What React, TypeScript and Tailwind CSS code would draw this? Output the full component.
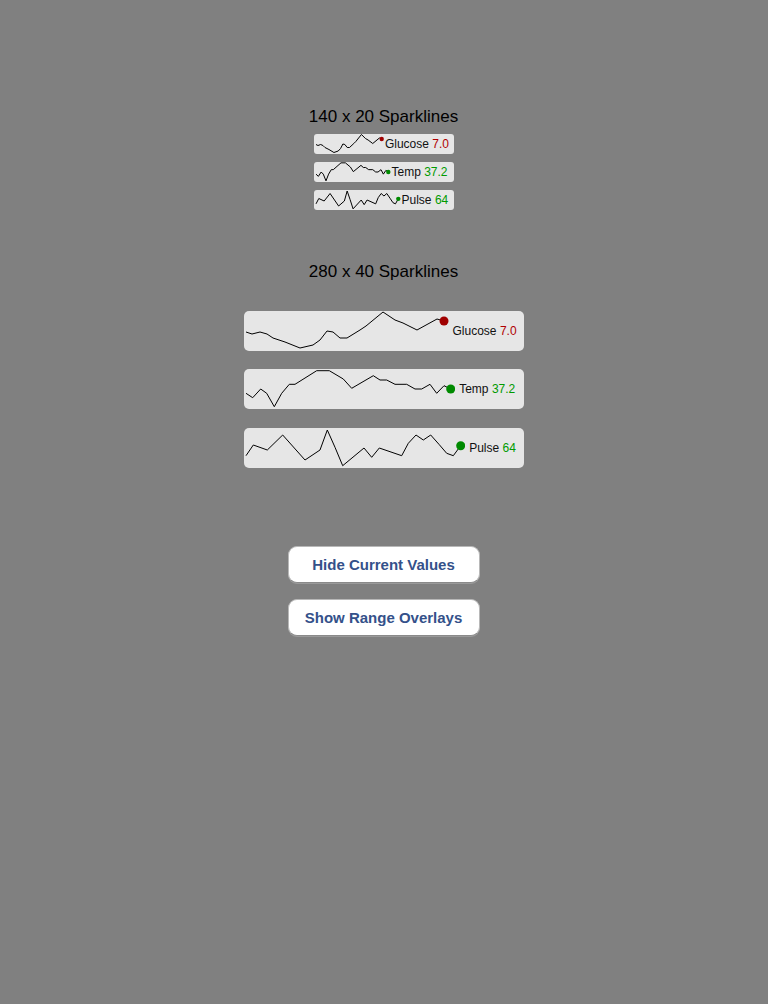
import React from 'react';

type Pt = [number, number];

// series traced in 280x40 card coordinates; last point carries the dot
const glucose: Pt[] = [
  [2, 21], [8, 23], [16, 21], [23, 23], [29, 27], [41, 31], [56, 37], [69, 34], [76, 29],
  [83, 20], [89, 21], [96, 27], [103, 27], [116, 19], [122, 15], [139, 1], [151, 9],
  [159, 12], [173, 19], [193, 8], [200, 10],
];
const temp: Pt[] = [
  [2, 24.3], [8.7, 28.7], [16.7, 20], [22.7, 24.3], [30.3, 37.7], [37.7, 24.3], [45.3, 15.3],
  [51, 15.3], [72.7, 1.7], [85.3, 1.7], [99.3, 10], [107.7, 19.3], [129.3, 6.7], [136, 11],
  [142.7, 11], [151, 15.3], [162.7, 15.3], [171, 20], [177.7, 20], [186, 15.3], [192.7, 24.3],
  [200, 16.7], [206.7, 20],
];
const pulse: Pt[] = [
  [2, 27.7], [9.3, 17], [23.3, 22], [38.7, 7], [61, 32], [76, 22], [83.3, 2], [91, 19.3],
  [98.7, 37.7], [120, 20], [127.7, 29.3], [135.3, 20], [157.7, 27.7], [164.3, 15.3], [172, 7],
  [179.3, 12], [186.7, 7], [195.3, 16.7], [202.7, 25.3], [209.3, 27.7], [216.7, 17.7],
];

interface SparkProps {
  data: Pt[];
  end: number; // x of the dot inside the svg
  height: number;
  r: number;
  dot: string;
}

const Spark: React.FC<SparkProps> = ({ data, end, height, r, dot }) => {
  const srcEnd = data[data.length - 1][0];
  const pts = data.map(([x, y]) => [2 + ((x - 2) * (end - 2)) / (srcEnd - 2), (y * height) / 40]);
  const last = pts[pts.length - 1];
  return (
    <svg width={end + r} height={height} className="shrink-0">
      <polyline
        points={pts.map((p) => p.join(',')).join(' ')}
        fill="none"
        stroke="#000"
        strokeWidth={1}
        strokeLinejoin="round"
      />
      <circle cx={last[0]} cy={last[1]} r={r} fill={dot} />
    </svg>
  );
};

const RED = '#b00000';
const GREEN = '#009a00';

interface RowProps {
  data: Pt[];
  end: number;
  label: string;
  value: string;
  color: string;
  big?: boolean;
}

const Row: React.FC<RowProps> = ({ data, end, label, value, color, big }) => (
  <div
    className={
      big
        ? 'w-[280px] h-[40px] flex items-center bg-[#e6e6e6] rounded-[5px]'
        : 'w-[140px] h-[20px] flex items-center bg-[#e6e6e6] rounded-[3px]'
    }
  >
    <Spark data={data} end={end} height={big ? 40 : 20} r={big ? 4.5 : 2.2} dot={color === RED ? '#a00000' : '#008a00'} />
    <span className={big ? 'ml-[4px] text-[12px] leading-none text-[#111]' : 'ml-[1px] text-[12px] leading-none text-[#111]'}>
      {label} <span style={{ color }}>{value}</span>
    </span>
  </div>
);

const Button: React.FC<{ children: React.ReactNode; className?: string }> = ({ children, className }) => (
  <button
    className={
      'w-[192px] h-[37px] pt-[2px] bg-white rounded-[9px] border border-[#b8b8b8] border-b-[#8a8a8a] shadow-[0_1px_0_#9a9a9a] text-[15px] font-bold text-[#34518a] ' +
      (className ?? '')
    }
  >
    {children}
  </button>
);

export default function App() {
  return (
    <div
      className="w-[768px] h-[1004px] bg-[#808080] flex flex-col items-center pt-[107px]"
      style={{ fontFamily: '"Liberation Sans", Arial, sans-serif' }}
    >
      <div className="ml-[-1px] text-[17px] leading-[20px] text-black">140 x 20 Sparklines</div>
      <div className="mt-[7px] flex flex-col gap-[8px]">
        <Row data={glucose} end={67.7} label="Glucose" value="7.0" color={RED} />
        <Row data={temp} end={74.3} label="Temp" value="37.2" color={GREEN} />
        <Row data={pulse} end={84.3} label="Pulse" value="64" color={GREEN} />
      </div>

      <div className="mt-[52px] ml-[-1px] text-[17px] leading-[20px] text-black">280 x 40 Sparklines</div>
      <div className="mt-[29px] flex flex-col">
        <Row big data={glucose} end={200} label="Glucose" value="7.0" color={RED} />
        <div className="mt-[18px]">
          <Row big data={temp} end={206.7} label="Temp" value="37.2" color={GREEN} />
        </div>
        <div className="mt-[19px]">
          <Row big data={pulse} end={216.7} label="Pulse" value="64" color={GREEN} />
        </div>
      </div>

      <div className="mt-[78px] ml-[-1px] flex flex-col gap-[16px]">
        <Button>Hide Current Values</Button>
        <Button>Show Range Overlays</Button>
      </div>
    </div>
  );
}
